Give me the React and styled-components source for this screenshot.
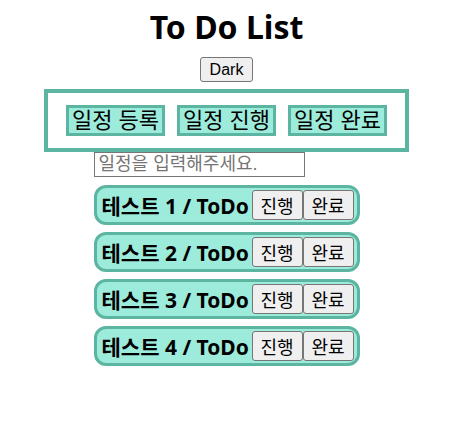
import styled, { createGlobalStyle } from "styled-components";

const GlobalStyle = createGlobalStyle`
    body {
        margin: 0;
        padding-top: 8px;
        background: #ffffff;
        font-family: "Noto Sans", "Noto Sans CJK KR", sans-serif;
    }
`

export const Wrapper = styled.div `
    display: flex;
    flex-direction: column;
    align-items: center;
    width: 453px;
`

export const Title = styled.h1 `
    margin: 0;
    font-family: "Noto Sans", "Noto Sans CJK KR", sans-serif;
    font-size: 32px;
    font-weight: 700;
    line-height: 38px;
    color: #000;
`

export const ModeButton = styled.button `
    margin-top: 11px;
    height: 25px;
    padding: 0 9px;
    font-family: "Liberation Sans", "Noto Sans CJK KR", sans-serif;
    font-size: 16px;
    background: #efefef;
    border: 1px solid #767676;
    border-radius: 3px;
    color: #000;
`

export const TabBox = styled.div `
    margin-top: 7px;
    box-sizing: border-box;
    width: 365px;
    height: 63px;
    border: 4px solid #5bb5a1;
    display: flex;
    align-items: center;
    justify-content: center;
    gap: 12px;
`

export const TabButton = styled.button `
    box-sizing: border-box;
    width: 99px;
    height: 31px;
    padding: 0;
    background: #9decdb;
    border: 3px solid #5bb5a1;
    font-family: "Liberation Sans", "Noto Sans CJK KR", sans-serif;
    font-size: 22px;
    line-height: 23px;
    color: #000;
    white-space: nowrap;
`

export const Section = styled.div `
    width: 266px;
    display: flex;
    flex-direction: column;
    align-items: flex-start;
`

export const TodoInput = styled.input `
    box-sizing: border-box;
    width: 211px;
    height: 25px;
    margin: 0;
    padding: 1px 4px;
    border: 1px solid #767676;
    font-family: "Liberation Sans", "Noto Sans CJK KR", sans-serif;
    font-size: 18px;
    &::placeholder {
        color: #757575;
    }
`

export const List = styled.div `
    margin-top: 8px;
    display: flex;
    flex-direction: column;
    gap: 7px;
`

export const Card = styled.div `
    box-sizing: border-box;
    width: 266px;
    height: 40px;
    padding: 0 3px 0 5px;
    background: #9decdb;
    border: 3px solid #5bb5a1;
    border-radius: 12px;
    display: flex;
    align-items: center;
`

export const CardText = styled.span `
    flex: 1;
    white-space: nowrap;
    overflow: hidden;
    font-family: "Noto Sans", "Noto Sans CJK KR", sans-serif;
    font-size: 21px;
    font-weight: 700;
    color: #000;
`

export const CardButton = styled.button `
    box-sizing: border-box;
    width: 51px;
    height: 30px;
    padding: 0;
    background: #efefef;
    border: 1px solid #767676;
    border-radius: 3px;
    font-family: "Liberation Sans", "Noto Sans CJK KR", sans-serif;
    font-size: 18px;
    color: #000;
`

const todos = [1, 2, 3, 4]

const App = () => {
    return (
        <Wrapper>
            <GlobalStyle />
            <Title>To Do List</Title>
            <ModeButton>Dark</ModeButton>
            <TabBox>
                <TabButton>일정 등록</TabButton>
                <TabButton>일정 진행</TabButton>
                <TabButton>일정 완료</TabButton>
            </TabBox>
            <Section>
                <TodoInput type="text" placeholder="일정을 입력해주세요." />
                <List>
                    {todos.map((n) => (
                        <Card key={n}>
                            <CardText>테스트 {n} / ToDo</CardText>
                            <CardButton>진행</CardButton>
                            <CardButton>완료</CardButton>
                        </Card>
                    ))}
                </List>
            </Section>
        </Wrapper>
    )
}

export default App
